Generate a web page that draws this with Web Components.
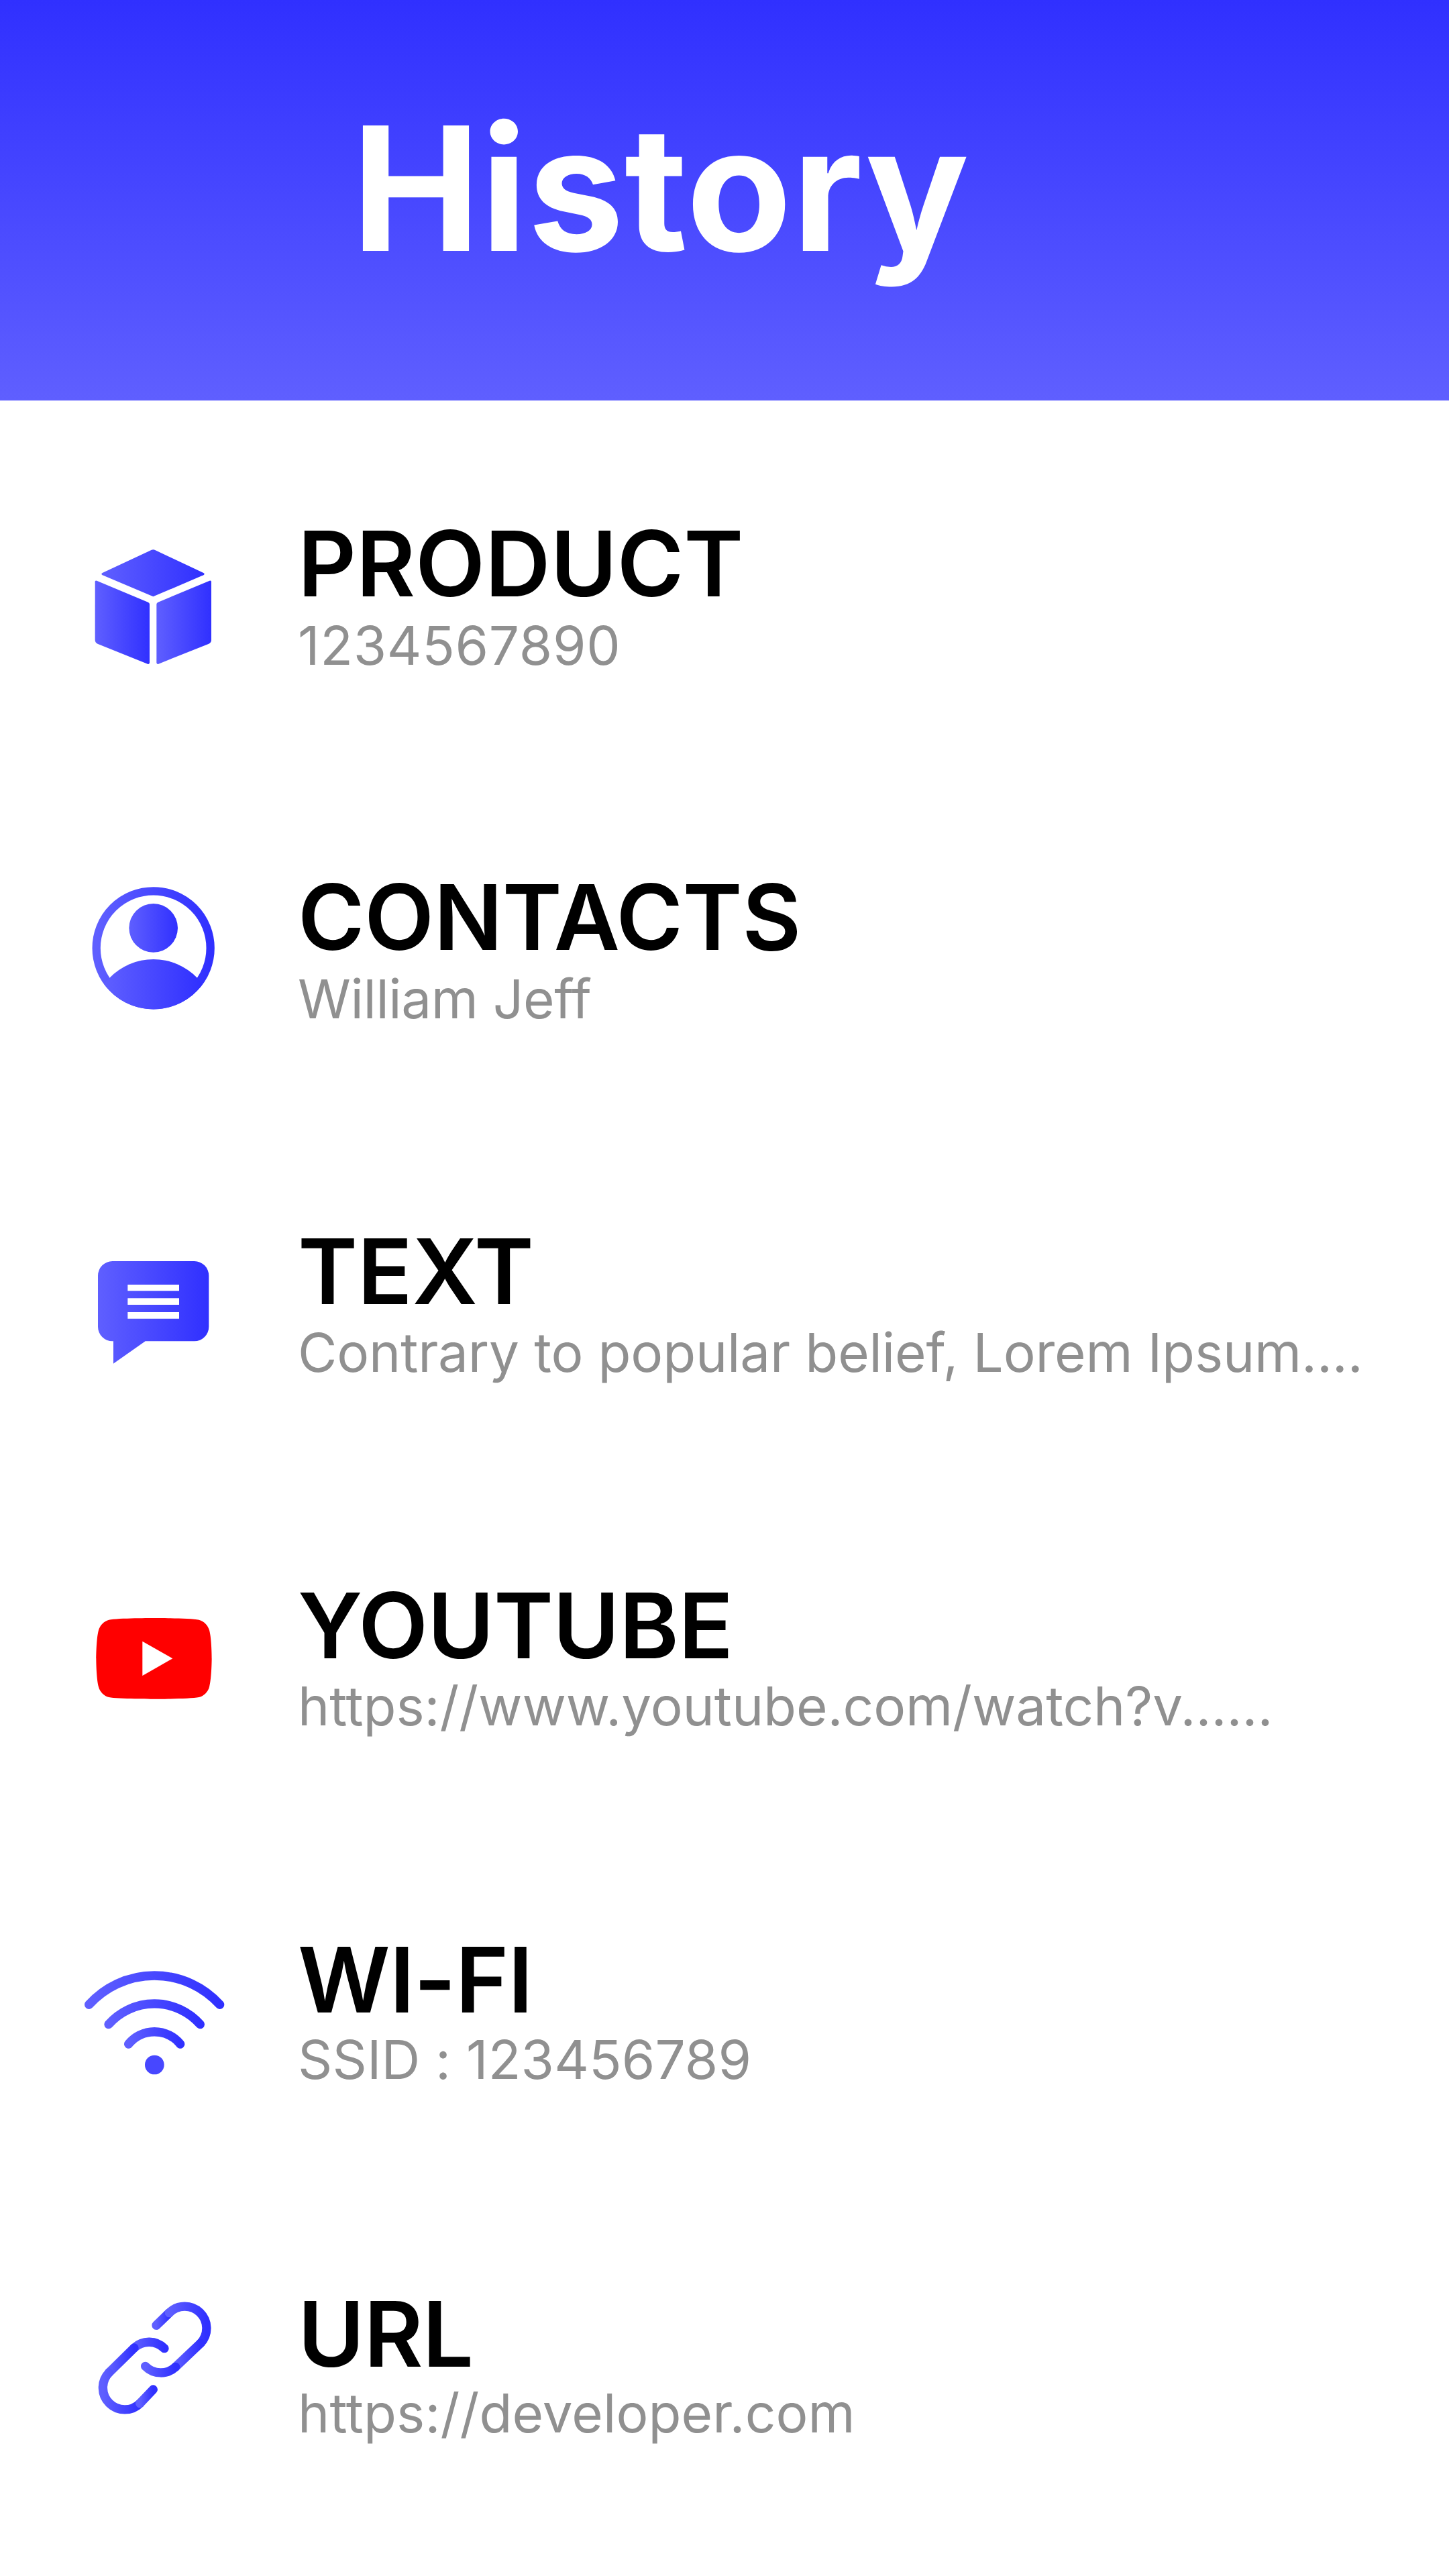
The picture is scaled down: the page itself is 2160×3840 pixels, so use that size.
<!DOCTYPE html>
<html lang="en">
<head>
<meta charset="utf-8">
<title>History</title>
<style>
  html, body { margin: 0; background: #fff; font-family: Inter, "Noto Sans", sans-serif; }
</style>
</head>
<body>
<history-page>
  <history-row icon="cube" label="PRODUCT" detail="1234567890" style="--detail-track:.7px"></history-row>
  <history-row icon="contact" label="CONTACTS" detail="William Jeff" style="--label-track:-.3px;--detail-track:-.4px"></history-row>
  <history-row icon="message" label="TEXT" detail="Contrary to popular belief, Lorem Ipsum...." style="--label-shift:1px;--detail-track:-.17px"></history-row>
  <history-row icon="youtube" label="YOUTUBE" detail="https://www.youtube.com/watch?v......" style="--label-shift:2px;--label-track:-.7px;--detail-track:-.07px"></history-row>
  <history-row icon="wifi" label="WI-FI" detail="SSID : 123456789" style="--label-shift:3px;--label-track:-1px;--detail-track:.15px"></history-row>
  <history-row icon="link" label="URL" detail="https://developer.com" style="--label-shift:4px;--label-track:-.8px;--detail-track:.1px"></history-row>
</history-page>
<script>
const grad = `<defs><linearGradient id="g"><stop offset="0" stop-color="#5f5fff"/><stop offset="1" stop-color="#3030ff"/></linearGradient></defs>`;

// each icon is drawn in a 780 box, 3 units to the pixel
const ICONS = {
  cube: { y: -15, x: 0, body: `${grad}<g fill="url(#g)">
    <path d="M378 119Q385 116 392 119L610 222Q618 227 610 232L385 328L158 232Q150 227 158 222Z"/>
    <path d="M125 262Q125 254 133 257L362 353Q369 356 369 362V622Q369 632 360 629L138 540Q125 534 125 522Z"/>
    <path d="M645 262Q645 254 637 257L407 353Q400 356 400 362V622Q400 632 409 629L632 540Q645 534 645 522Z"/></g>` },
  contact: { y: 66, x: 0, body: `${grad}
    <circle cx="386" cy="400" r="255" fill="none" stroke="url(#g)" stroke-width="37"/>
    <circle cx="386" cy="310" r="109" fill="url(#g)"/>
    <path d="M190 533A273 273 0 0 1 582 533L606 562A273 273 0 0 1 166 562Z" fill="url(#g)"/>` },
  message: { y: -63, x: 0, body: `${grad}
    <path d="M203 90H569A65 65 0 0 1 634 155V383A65 65 0 0 1 569 448H350L207 548V448H203A65 65 0 0 1 138 383V155A65 65 0 0 1 203 90Z" fill="url(#g)"/>
    <path d="M271 195H501V223H271ZM271 256H501V285H271ZM271 318H501V347H271Z" fill="#fff"/>` },
  youtube: { y: -72, x: 0, body: `
    <path d="M590 104C612 110 630 128 636 150C647 190 647 277 647 277C647 277 647 364 636 404C630 426 612 444 590 450C550 458 388 458 388 458C388 458 227 458 187 450C165 444 147 426 141 404C130 364 130 277 130 277C130 277 130 190 141 150C147 128 165 110 187 104C227 96 388 96 388 96C388 96 550 96 590 104Z" fill="#f00"/>
    <path d="M337 200L472 277L337 354Z" fill="#fff"/>` },
  wifi: { y: -81, x: 0, body: `${grad}<g fill="none" stroke="url(#g)" stroke-width="40" stroke-linecap="round">
    <path d="M98 235A394 394 0 0 1 683 235"/>
    <path d="M186 323A273 273 0 0 1 595 323"/>
    <path d="M275 411A149 149 0 0 1 506 411"/></g>
    <circle cx="391" cy="504" r="43" fill="#4747ff"/>` },
  link: { y: 0, x: -60, body: `${grad}<g fill="none" stroke="url(#g)" stroke-width="40" stroke-linecap="round">
    <path d="M339 169L397 113"/>
    <path d="M397 113A97.6 97.6 0 0 1 537 249"/>
    <path d="M425 355L537 249"/>
    <path d="M290 352A97 97 0 0 0 425 355"/>
    <path d="M375 272A97 97 0 0 0 240 270"/>
    <path d="M127 381L240 270"/>
    <path d="M127 381A97.6 97.6 0 0 0 266 518"/>
    <path d="M266 518L325 456"/></g>` }
};

class HistoryIcon extends HTMLElement {
  constructor() {
    super();
    this.attachShadow({ mode: "open" });
  }
  connectedCallback() {
    const icon = ICONS[this.getAttribute("name")];
    this.shadowRoot.innerHTML = `
      <style>
        :host { display: block; width: 260px; height: 260px; flex: none; }
        svg { display: block; width: 100%; height: 100%; }
      </style>
      <svg viewBox="${icon.x} ${icon.y} 780 780">${icon.body}</svg>
    `;
  }
}
customElements.define("history-icon", HistoryIcon);

class HistoryRow extends HTMLElement {
  constructor() {
    super();
    this.attachShadow({ mode: "open" });
  }
  connectedCallback() {
    this.shadowRoot.innerHTML = `
      <style>
        :host { display: flex; align-items: center; height: 527px; padding-left: 100px; }
        .text { margin-left: 84px; margin-top: -26px; white-space: nowrap; }
        .label {
          font-size: 135px; line-height: 140px; font-weight: 600; color: #000;
          letter-spacing: var(--label-track, 0);
          margin-top: var(--label-shift, 0px);
          margin-bottom: calc(0px - var(--label-shift, 0px));
        }
        .detail {
          font-size: 80px; line-height: 104px; font-weight: 400; color: #909090;
          letter-spacing: var(--detail-track, 0);
        }
      </style>
      <history-icon name="${this.getAttribute("icon")}"></history-icon>
      <div class="text">
        <div class="label">${this.getAttribute("label")}</div>
        <div class="detail">${this.getAttribute("detail")}</div>
      </div>
    `;
  }
}
customElements.define("history-row", HistoryRow);

class HistoryPage extends HTMLElement {
  constructor() {
    super();
    this.attachShadow({ mode: "open" });
    this.shadowRoot.innerHTML = `
      <style>
        :host { display: block; width: 2160px; height: 3840px; background: #fff; overflow: hidden; }
        header {
          height: 597px; box-sizing: border-box; padding-left: 524px; padding-bottom: 36px;
          display: flex; align-items: center;
          background: linear-gradient(180deg, #3030ff, #5f5fff);
          color: #fff; font-size: 257px; font-weight: 700; line-height: 1; letter-spacing: .4px;
        }
        main { display: block; padding-top: 44px; }
      </style>
      <header>History</header>
      <main><slot></slot></main>
    `;
  }
}
customElements.define("history-page", HistoryPage);
</script>
</body>
</html>
